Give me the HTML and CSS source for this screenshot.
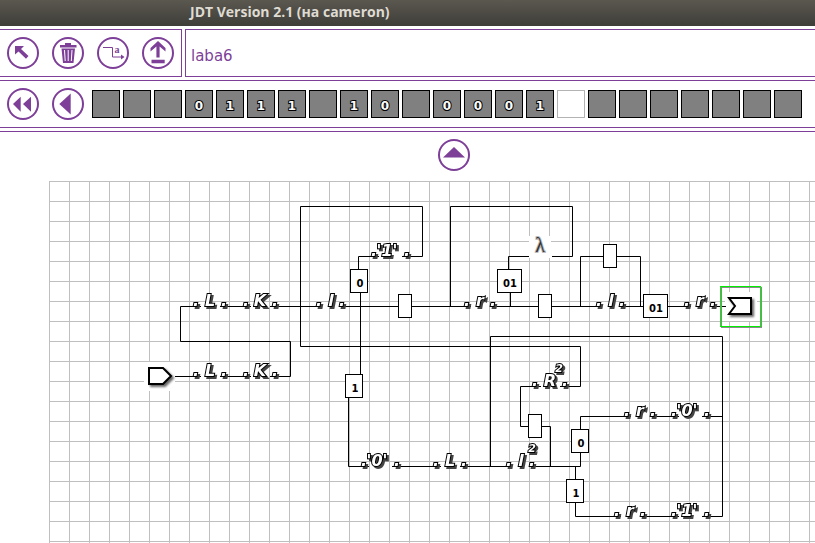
FILE: index.html
```html
<!DOCTYPE html>
<html lang="ru">
<head>
<meta charset="utf-8">
<title>JDT Version 2.1</title>
<link rel="stylesheet" href="styles.css">
</head>
<body>
<header class="titlebar"><h1>JDT Version 2.1 (на cameron)</h1></header>

<div class="top">
  <div class="toolbar">
    <button class="round" aria-label="Select"><svg viewBox="0 0 32 32"><path d="M8 9H17L14 12L21.500 19L19 21.700L11.500 14.500L8 17.500Z"/></svg></button>
    <button class="round" aria-label="Delete"><svg viewBox="0 0 32 32"><path d="M13 6h6v2h5.500v2.500H8V8h5zM9.500 11.500h13.500L21.500 26H11z"/><path class="cut" d="M12.500 13l.7 11M16.200 13v11M20 13l-.7 11"/></svg></button>
    <button class="round" aria-label="Label"><svg viewBox="0 0 32 32"><path class="line" d="M6 10.500H15.500V20H26"/><path d="M24 17.500L27.500 20L24 22.500Z"/><text x="20" y="16">a</text></svg></button>
    <button class="round" aria-label="Upload"><svg viewBox="0 0 32 32"><path d="M16 4L23.500 11V14.500L17.600 9.500V20.500H14.400V9.500L8.500 14.500V11ZM9.500 22.700h13.200v3.600H9.500z"/></svg></button>
  </div>
  <input class="name" aria-label="Name" value="laba6">
</div>

<div class="tape">
  <button class="round" aria-label="Fast back"><svg viewBox="0 0 32 32"><path d="M6 16L13.700 8.700V23.700ZM16 16L24 8.700V23.700Z"/></svg></button>
  <button class="round" aria-label="Back"><svg viewBox="0 0 32 32"><path d="M7.300 16L18.700 5.500V26.500Z"/></svg></button>
  <ol class="cells">
    <li></li><li></li><li></li><li>0</li><li>1</li><li>1</li><li>1</li><li></li><li>1</li><li>0</li><li></li><li>0</li><li>0</li><li>0</li><li>1</li><li class="current"></li><li></li><li></li><li></li><li></li><li></li><li></li><li></li>
  </ol>
</div>

<main class="work">
  <div class="sheet">
    <button class="round" aria-label="Up"><svg viewBox="0 0 32 32"><path d="M16 8L27 18.500H5Z"/></svg></button>
    <svg class="diagram" viewBox="49 181 810 380" width="810" height="380">
      <defs>
        <pattern id="grid" x="49" y="181" width="20" height="20" patternUnits="userSpaceOnUse"><path class="gridline" d="M0 .5H20M.5 0V20"/></pattern>
      </defs>
      <rect x="49" y="181" width="810" height="380" fill="url(#grid)"/>
      <g class="blank">
        <rect x="144" y="362" width="31" height="29"/>
        <rect x="529" y="236" width="22" height="22"/>
        <rect x="725" y="292" width="32" height="29"/>
      </g>
      <g class="wires" transform="translate(.5 .5)">
        <path d="M175 376H200M220 376H250M270 376H290V341H180V306H200M220 306H250M270 306H318"/>
        <path d="M402 256H422V206H300V346H580V386H560M540 386H520V426H550V466"/>
        <path d="M378 256H358V280M345 306H470M360 290V380M348 390V466H368M392 466H440M460 466H508M532 466H580V416H630"/>
        <path d="M450 306V206H572V256H552M528 256H508V280M510 290V306M495 306H600M625 306H690M715 306H725"/>
        <path d="M580 306V256H640V306"/>
        <path d="M490 466V336H722V516H702M722 416H702M678 416H650M678 516H640M620 516H575V466"/>
      </g>
      <g class="boxes" transform="translate(.5 .5)">
        <rect x="350" y="269" width="17" height="23"/>
        <rect x="345" y="374" width="17" height="23"/>
        <rect x="398" y="294" width="13" height="23"/>
        <rect x="497" y="269" width="24" height="23"/>
        <rect x="538" y="294" width="13" height="23"/>
        <rect x="603" y="244" width="13" height="23"/>
        <rect x="643" y="294" width="24" height="23"/>
        <rect x="528" y="414" width="13" height="23"/>
        <rect x="571" y="429" width="17" height="23"/>
        <rect x="566" y="479" width="17" height="23"/>
      </g>
      <g class="digits">
        <text x="360" y="287">0</text>
        <text x="355" y="392">1</text>
        <text x="510" y="287">01</text>
        <text x="656" y="312">01</text>
        <text x="581" y="447">0</text>
        <text x="576" y="497">1</text>
      </g>
      <g class="ops">
        <text x="196 210 224" y="376">.L.</text>
        <text x="246 260 275" y="376">.K.</text>
        <text x="196 210 224" y="306">.L.</text>
        <text x="246 260 275" y="306">.K.</text>
        <text x="319 331 342" y="306">.l.</text>
        <text x="374 379 387 395 407" y="256">.'1'.</text>
        <text x="467 480 493" y="306">.r.</text>
        <text x="599 611 622" y="306">.l.</text>
        <text x="687 700 713" y="306">.r.</text>
        <text x="364 369 377 385 397" y="466">.'0'.</text>
        <text x="436 450 464" y="466">.L.</text>
        <text x="509 521 532" y="466">.l.<tspan class="power" x="532" y="452">2</tspan></text>
        <text x="535 550 565" y="386">.R.<tspan class="power" x="559" y="372">2</tspan></text>
        <text x="627 640 653" y="416">.r.</text>
        <text x="674 679 687 695 707" y="416">.'0'.</text>
        <text x="617 630 643" y="516">.r.</text>
        <text x="674 679 687 695 707" y="516">.'1'.</text>
      </g>
      <text class="lambda" x="540" y="252">λ</text>
      <g class="ends">
        <path d="M149 368H163L171 376L163 384H149Z"/>
        <path d="M729 298H751V314H729L735 306Z"/>
      </g>
      <rect class="selection" x="721" y="287" width="40" height="40" transform="translate(-.5 -.5)"/>
    </svg>
  </div>
</main>
</body>
</html>
```
FILE: styles.css
```css
:root {
  --purple: #7d3f98;
}

* {
  box-sizing: border-box;
}

body {
  margin: 0;
  height: 100vh;
  overflow: hidden;
  display: flex;
  flex-direction: column;
  background: #fff;
  font-family: "DejaVu Sans", sans-serif;
}

.titlebar {
  flex: none;
  height: 26px;
  padding-left: 190px;
  background: linear-gradient(#5b5850, #3e3d38);
}

.titlebar h1 {
  margin: 0;
  font: bold 14px/24px "Open Sans", sans-serif;
  color: #dfdbd2;
}

.top {
  display: flex;
  flex: none;
  gap: 3px;
  margin-top: 3px;
}

.toolbar {
  display: flex;
  gap: 13px;
  padding: 7px;
  border: 1px solid var(--purple);
  border-left: 0;
}

.name {
  flex: 1;
  min-width: 0;
  padding: 6px 5px 0;
  border: 1px solid var(--purple);
  border-right: 0;
  outline: 0;
  background: #fff;
  color: var(--purple);
  font: 15px "DejaVu Sans", sans-serif;
}

.tape {
  display: flex;
  flex: none;
  align-items: center;
  gap: 13px;
  margin-top: 3px;
  padding: 7px;
  border: solid var(--purple);
  border-width: 1px 0;
}

.round {
  flex: none;
  width: 32px;
  height: 32px;
  padding: 0;
  border: 0;
  background: none;
}

.round svg {
  display: block;
  border-radius: 50%;
  box-shadow: inset 0 0 0 2px var(--purple);
  fill: var(--purple);
}

.round .cut {
  fill: none;
  stroke: #fff;
  stroke-width: 1;
}

.round .line {
  fill: none;
  stroke: var(--purple);
  stroke-width: 1;
}

.round text {
  font: bold 10px "Liberation Serif", serif;
  text-anchor: middle;
}

.cells {
  display: flex;
  gap: 3px;
  margin: 0 0 0 -5px;
  padding: 0;
  list-style: none;
}

.cells li {
  flex: none;
  width: 28px;
  height: 28px;
  border: 1px solid #000;
  background: #808080;
  color: #fff;
  font: bold 12px/30px "DejaVu Sans", sans-serif;
  text-align: center;
  -webkit-text-stroke: 2px #000;
  paint-order: stroke;
}

.cells .current {
  border-color: #b3b3b3;
  background: #fff;
}

.work {
  flex: 1;
  min-height: 0;
  margin-top: 3px;
  padding: 7px 0 0 49px;
  border-top: 1px solid var(--purple);
  overflow: hidden;
}

.sheet {
  display: flex;
  flex-direction: column;
  align-items: center;
  gap: 10px;
  width: max-content;
}

.diagram {
  display: block;
}

.gridline {
  fill: none;
  stroke: #bfbfbf;
}

.blank rect {
  fill: #fff;
}

.wires path {
  fill: none;
  stroke: #000;
  stroke-linecap: square;
}

.boxes rect {
  fill: #fff;
  stroke: #000;
}

.digits text {
  font: bold 10px "DejaVu Sans", sans-serif;
  text-anchor: middle;
}

.ops text {
  font: italic bold 16px "DejaVu Sans", sans-serif;
  text-anchor: middle;
  fill: #fff;
  stroke: #000;
  stroke-width: 2px;
  paint-order: stroke;
  filter: drop-shadow(2px 2px 0 #444);
}

.ops .power {
  font-size: 11px;
}

.lambda {
  font: 20px "Liberation Serif", serif;
  text-anchor: middle;
  fill: #333;
  stroke: #bbb;
  stroke-width: 2px;
  paint-order: stroke;
}

.ends path {
  fill: #fff;
  stroke: #000;
  stroke-width: 2px;
  filter: drop-shadow(2px 2px 1px #666);
}

.selection {
  fill: none;
  stroke: #00f000;
  stroke-width: 1px;
  filter: drop-shadow(1px 1px 0 #8a8a8a);
}
```
